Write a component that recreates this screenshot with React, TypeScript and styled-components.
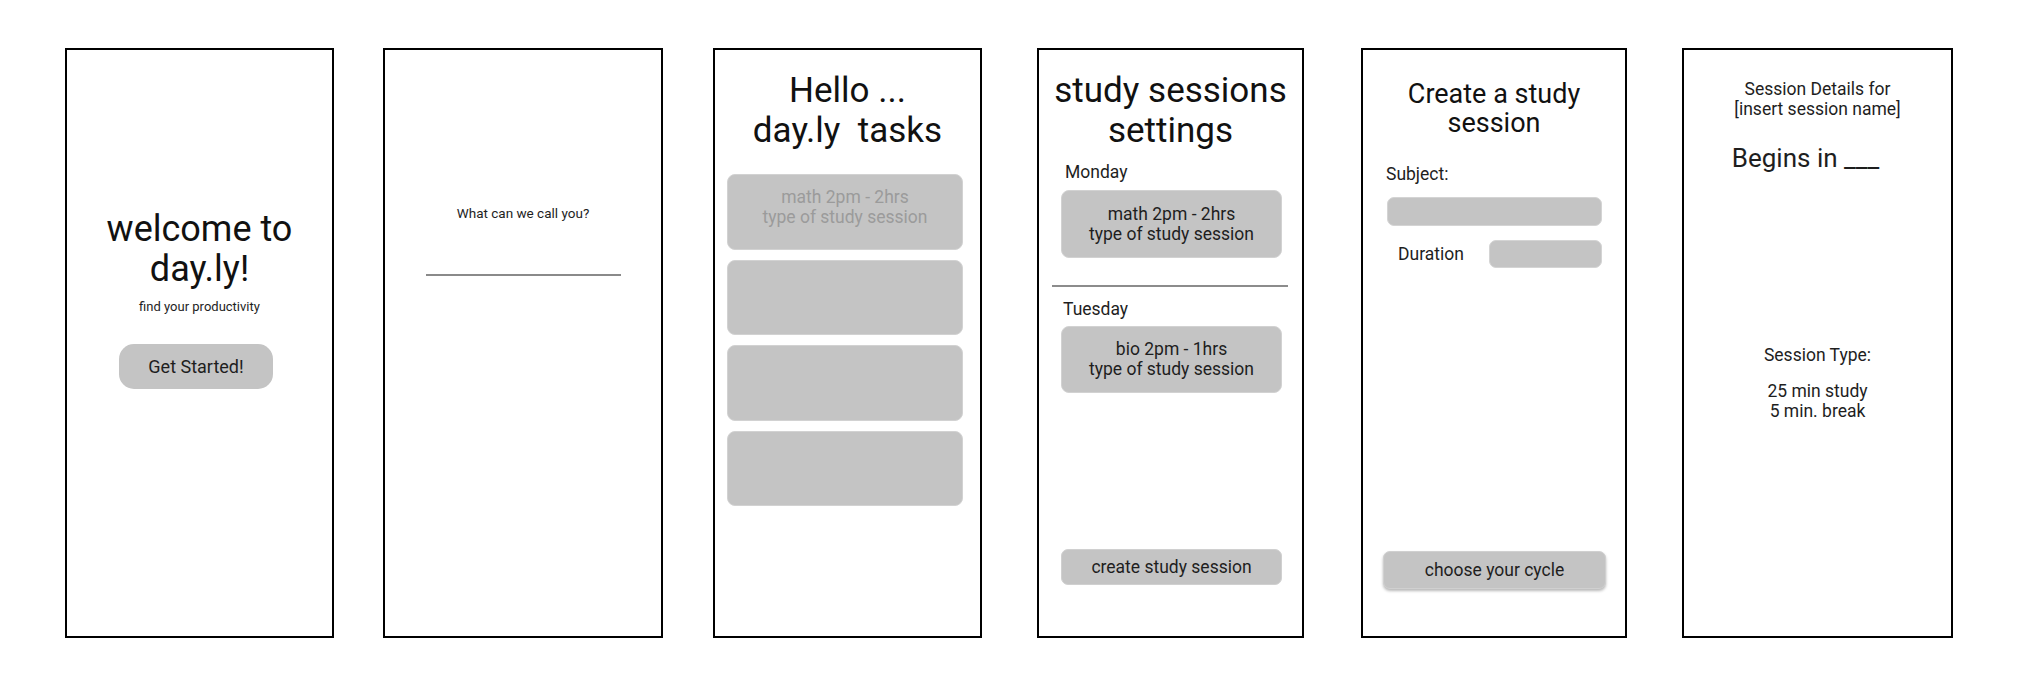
import React from "react";
import styled, { createGlobalStyle } from "styled-components";

const Global = createGlobalStyle`
  html, body { margin: 0; padding: 0; background: #ffffff; }
  body { font-family: Roboto, "Liberation Sans", Arial, sans-serif; }
  * { box-sizing: border-box; }
`;

const Board = styled.main`
  display: flex;
  align-items: flex-start;
  width: 2018px;
  height: 687px;
  padding: 48px 0 0 65px;
`;

const Screen = styled.section<{ $w: number; $gap?: number }>`
  flex: none;
  width: ${(p) => p.$w}px;
  height: 590px;
  margin-left: ${(p) => p.$gap ?? 0}px;
  border: 2px solid #000;
  display: flex;
  flex-direction: column;
  align-items: stretch;
  color: #1e1e1e;
  font-family: Roboto, "Liberation Sans", Arial, sans-serif;
`;

const Title = styled.h1<{ $size: number; $lh: number; $mt: number }>`
  margin: ${(p) => p.$mt}px 0 0;
  font-size: ${(p) => p.$size}px;
  line-height: ${(p) => p.$lh}px;
  font-weight: 400;
  text-align: center;
  color: #111;
  white-space: pre;
`;

const Line = styled.p<{ $size?: number; $lh?: number; $mt?: number; $ml?: number; $pr?: number; $align?: "left" | "center" }>`
  margin: ${(p) => p.$mt ?? 0}px 0 0 ${(p) => p.$ml ?? 0}px;
  padding-right: ${(p) => p.$pr ?? 0}px;
  font-size: ${(p) => p.$size ?? 17.5}px;
  line-height: ${(p) => p.$lh ?? 20}px;
  text-align: ${(p) => p.$align ?? "center"};
  white-space: pre;
  color: #1e1e1e;
`;

const StartButton = styled.button`
  align-self: flex-start;
  margin: 29px 0 0 52px;
  width: 154px;
  height: 45px;
  border: none;
  border-radius: 15px;
  background: #c4c4c4;
  font-family: Roboto, "Liberation Sans", Arial, sans-serif;
  font-size: 18px;
  color: #1e1e1e;
  padding: 0;
`;

const NameRule = styled.div`
  margin: 53px 0 0 41px;
  width: 195px;
  height: 1.5px;
  background: #8a8a8a;
`;

const CardStack = styled.div`
  display: flex;
  flex-direction: column;
  gap: 10px;
  margin: 23px 0 0 12px;
  width: 236px;
`;

const Card = styled.div<{ $h: number; $w?: number; $mt?: number; $ml?: number; $muted?: boolean; $center?: boolean }>`
  display: flex;
  flex-direction: column;
  justify-content: ${(p) => (p.$center ? "center" : "flex-start")};
  padding-top: ${(p) => (p.$center ? 0 : 12)}px;
  margin: ${(p) => p.$mt ?? 0}px 0 0 ${(p) => p.$ml ?? 0}px;
  width: ${(p) => (p.$w ? `${p.$w}px` : "auto")};
  height: ${(p) => p.$h}px;
  border-radius: 8px;
  background: #c4c4c4;
  border: 1px solid #d2d2d2;
  text-align: center;
  font-size: 17.5px;
  line-height: 20px;
  color: ${(p) => (p.$muted ? "#9b9b9b" : "#1e1e1e")};
`;

const Divider = styled.hr`
  margin: 27px 0 0 13px;
  width: 236px;
  height: 1.5px;
  border: none;
  background: #8c8c8c;
`;

const ActionButton = styled.button<{ $w: number; $h: number; $ml: number; $mb: number; $raised?: boolean }>`
  margin: auto 0 ${(p) => p.$mb}px ${(p) => p.$ml}px;
  width: ${(p) => p.$w}px;
  height: ${(p) => p.$h}px;
  padding: 0;
  border: 1px solid #d0d0d0;
  border-radius: 7px;
  background: #c4c4c4;
  font-family: Roboto, "Liberation Sans", Arial, sans-serif;
  font-size: 17.5px;
  color: #1e1e1e;
  box-shadow: ${(p) => (p.$raised ? "0 2px 3px rgba(0,0,0,0.28)" : "none")};
`;

const Field = styled.div<{ $w: number; $h: number; $mt?: number; $ml?: number }>`
  margin: ${(p) => p.$mt ?? 0}px 0 0 ${(p) => p.$ml ?? 0}px;
  width: ${(p) => p.$w}px;
  height: ${(p) => p.$h}px;
  border-radius: 7px;
  background: #c4c4c4;
  border: 1px solid #d4d4d4;
`;

const FieldRow = styled.div`
  display: flex;
  align-items: center;
  justify-content: space-between;
  margin: 14px 23px 0 35px;
`;

const RowLabel = styled.span`
  font-size: 17.5px;
  line-height: 20px;
  color: #1e1e1e;
`;

export default function App() {
  return (
    <>
      <Global />
      <Board>
        <Screen $w={269}>
          <Title $size={36} $lh={40} $mt={159}>{"welcome to\nday.ly!"}</Title>
          <Line $size={13} $lh={16} $mt={10}>find your productivity</Line>
          <StartButton>Get Started!</StartButton>
        </Screen>

        <Screen $w={280} $gap={49}>
          <Line $size={13.5} $lh={16} $mt={155}>What can we call you?</Line>
          <NameRule />
        </Screen>

        <Screen $w={269} $gap={50}>
          <Title $size={35} $lh={40} $mt={21}>{"Hello ...\nday.ly  tasks"}</Title>
          <CardStack>
            <Card $h={75.5} $muted>
              <span>math 2pm - 2hrs</span>
              <span>type of study session</span>
            </Card>
            <Card $h={75.5} />
            <Card $h={75.5} />
            <Card $h={75.5} />
          </CardStack>
        </Screen>

        <Screen $w={267} $gap={55}>
          <Title $size={35} $lh={40} $mt={21}>{"study sessions\nsettings"}</Title>
          <Line $align="left" $mt={11} $ml={26}>Monday</Line>
          <Card $center $h={68} $w={221} $mt={8} $ml={22}>
            <span>math 2pm - 2hrs</span>
            <span>type of study session</span>
          </Card>
          <Divider />
          <Line $align="left" $mt={12} $ml={24}>Tuesday</Line>
          <Card $center $h={67} $w={221} $mt={7} $ml={22}>
            <span>bio 2pm - 1hrs</span>
            <span>type of study session</span>
          </Card>
          <ActionButton $w={221} $h={36} $ml={22} $mb={51}>create study session</ActionButton>
        </Screen>

        <Screen $w={266} $gap={57}>
          <Title $size={27} $lh={29} $mt={30}>{"Create a study\nsession"}</Title>
          <Line $align="left" $mt={26} $ml={23}>Subject:</Line>
          <Field $w={215} $h={29} $mt={13} $ml={24} />
          <FieldRow>
            <RowLabel>Duration</RowLabel>
            <Field $w={113} $h={28} />
          </FieldRow>
          <ActionButton $raised $w={223} $h={38} $ml={20} $mb={47}>choose your cycle</ActionButton>
        </Screen>

        <Screen $w={271} $gap={55}>
          <Line $mt={29}>{"Session Details for\n[insert session name]"}</Line>
          <Line $size={26} $lh={30} $mt={24} $pr={24}>Begins in ___</Line>
          <Line $mt={172}>Session Type:</Line>
          <Line $mt={16}>{"25 min study\n5 min. break"}</Line>
        </Screen>
      </Board>
    </>
  );
}
